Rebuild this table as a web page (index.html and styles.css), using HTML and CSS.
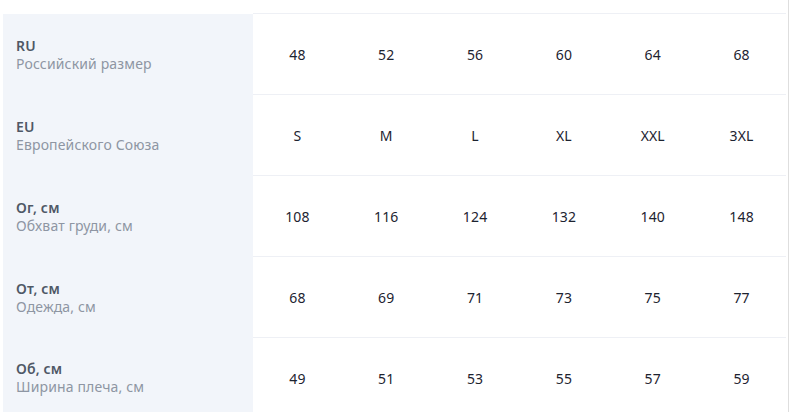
FILE: index.html
```html
<!DOCTYPE html>
<html lang="ru">
<head>
<meta charset="utf-8">
<link rel="stylesheet" href="styles.css">
</head>
<body>
<div class="frame">
  <table class="sizes">
    <tbody>
      <tr>
        <th><div class="code">RU</div><div class="desc">Российский размер</div></th>
        <td>48</td><td>52</td><td>56</td><td>60</td><td>64</td><td>68</td>
      </tr>
      <tr>
        <th><div class="code">EU</div><div class="desc">Европейского Союза</div></th>
        <td>S</td><td>M</td><td>L</td><td>XL</td><td>XXL</td><td>3XL</td>
      </tr>
      <tr>
        <th><div class="code">Ог, см</div><div class="desc">Обхват груди, см</div></th>
        <td>108</td><td>116</td><td>124</td><td>132</td><td>140</td><td>148</td>
      </tr>
      <tr>
        <th><div class="code">От, см</div><div class="desc">Одежда, см</div></th>
        <td>68</td><td>69</td><td>71</td><td>73</td><td>75</td><td>77</td>
      </tr>
      <tr>
        <th><div class="code">Об, см</div><div class="desc">Ширина плеча, см</div></th>
        <td>49</td><td>51</td><td>53</td><td>55</td><td>57</td><td>59</td>
      </tr>
    </tbody>
  </table>
</div>
</body>
</html>
```

FILE: styles.css
```css
html, body {
  margin: 0;
  padding: 0;
  background: #ffffff;
  overflow: hidden;
}
.frame {
  width: 789px;
  height: 412px;
  box-sizing: border-box;
  padding: 13px 0 0 3px;
  border-right: 1px solid #dedede;
  font-family: "Noto Sans", "Liberation Sans", sans-serif;
  font-size: 14px;
  letter-spacing: 0.15px;
}
.sizes {
  width: 783px;
  border-collapse: collapse;
  table-layout: fixed;
}
.sizes th {
  width: 250px;
  background: #f2f5fa;
  text-align: left;
  padding: 1px 0 0 13px;
  height: 80px;
  box-sizing: border-box;
  vertical-align: middle;
  font-weight: normal;
}
.sizes td {
  text-align: center;
  color: #1d2330;
  border-top: 1px solid #eef0f5;
  height: 80px;
  padding: 0;
}
.code {
  color: #4f5866;
  font-weight: 600;
  line-height: 18px;
}
.desc {
  color: #8e96a3;
  line-height: 18px;
}
```
